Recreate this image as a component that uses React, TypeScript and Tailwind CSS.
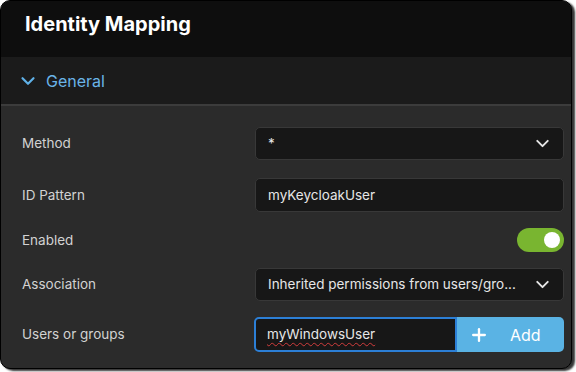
import React from "react";
import { ChevronDown, Plus } from "lucide-react";

const Row = ({ label, children, className = "" }: { label: string; children: React.ReactNode; className?: string }) => (
  <div className={`flex items-center ${className}`}>
    <div className="w-[254px] shrink-0 pl-[21px] text-[13.5px] text-[#d2d2d2]">{label}</div>
    <div className="flex-1 pr-[7px]">{children}</div>
  </div>
);

const App = () => {
  return (
    <div className="w-[576px] h-[372px] bg-white" style={{ fontFamily: "Inter, 'Noto Sans', sans-serif" }}>
      <div className="w-[572px] h-[369px] rounded-[10px] border border-black bg-[#2b2b2b] overflow-hidden shadow-[3px_2px_2px_rgba(0,0,0,0.8)] flex flex-col">
        {/* Header */}
        <div className="h-[56px] bg-[#0e0e0e] flex items-center pl-[24px]">
          <h1 className="text-[20px] font-bold text-white -mt-[10px]">Identity Mapping</h1>
        </div>

        {/* Section toggle */}
        <div className="h-[49px] bg-[#1b1b1b] flex items-center pl-[16px] gap-[7px] border-b-2 border-[#3c3c3c]">
          <ChevronDown size={22} strokeWidth={2.4} className="text-[#5fb0e6]" />
          <span className="text-[16px] text-[#6ab4e8]">General</span>
        </div>

        {/* Fields */}
        <div className="flex flex-col pt-[21px]">
          <Row label="Method">
            <div className="h-[33px] rounded-[5px] border border-[#383838] bg-[#171717] flex items-center justify-between pl-[12px] pr-[10px]">
              <span className="text-[13.5px] text-[#e6e6e6]">*</span>
              <ChevronDown size={21} strokeWidth={2.2} className="text-[#e6e6e6]" />
            </div>
          </Row>

          <Row label="ID Pattern" className="mt-[18px]">
            <div className="h-[34px] rounded-[5px] border border-[#383838] bg-[#171717] flex items-center pl-[12px]">
              <span className="text-[13.5px] text-[#e6e6e6]">myKeycloakUser</span>
            </div>
          </Row>

          <Row label="Enabled" className="mt-[16px]">
            <div className="flex justify-end">
              <div className="w-[47px] h-[24px] rounded-full bg-[#79b530] flex items-center justify-end pr-[4px]">
                <div className="w-[16px] h-[16px] rounded-full bg-white" />
              </div>
            </div>
          </Row>

          <Row label="Association" className="mt-[16px]">
            <div className="h-[33px] rounded-[5px] border border-[#383838] bg-[#171717] flex items-center justify-between pl-[12px] pr-[10px]">
              <span className="text-[13.5px] text-[#e6e6e6]">Inherited permissions from users/gro...</span>
              <ChevronDown size={21} strokeWidth={2.2} className="text-[#e6e6e6]" />
            </div>
          </Row>

          <Row label="Users or groups" className="mt-[16px]">
            <div className="flex h-[35px] -ml-[1px]">
              <div className="w-[203px] rounded-l-[5px] border-2 border-[#2c7fd6] bg-[#171717] flex items-center pl-[11px]">
                <span className="text-[13.5px] text-[#e6e6e6] underline decoration-wavy decoration-[#d23c3c] decoration-1 underline-offset-[3px]">
                  myWindowsUser
                </span>
              </div>
              <button className="flex-1 rounded-r-[5px] bg-[#5ab3e4] flex items-center pl-[12px] text-white">
                <Plus size={20} strokeWidth={2.8} />
                <span className="ml-[21px] text-[16px]">Add</span>
              </button>
            </div>
          </Row>
        </div>
      </div>
    </div>
  );
};

export default App;
